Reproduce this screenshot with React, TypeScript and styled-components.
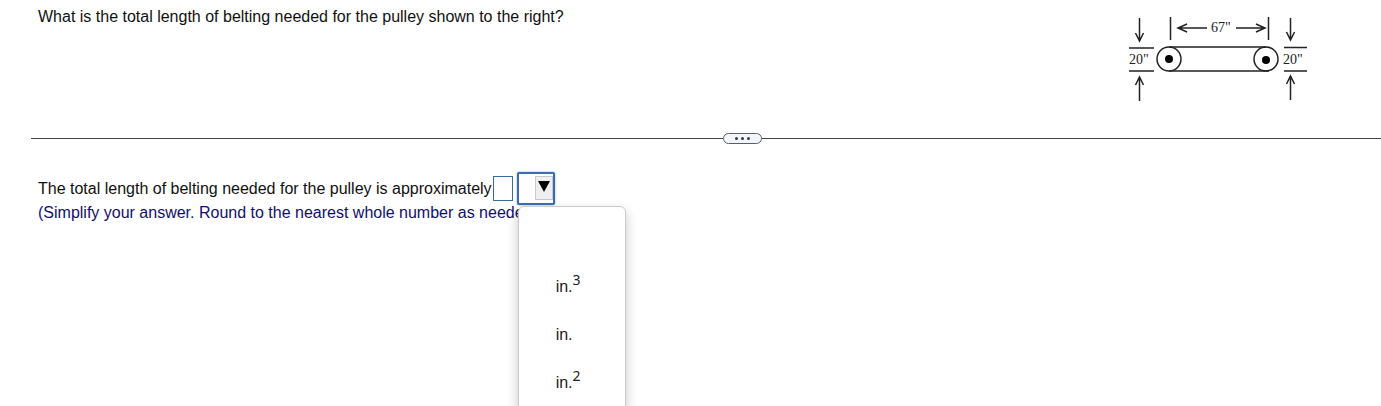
import React from "react";
import styled, { createGlobalStyle } from "styled-components";

const GlobalStyle = createGlobalStyle`
  * { box-sizing: border-box; }
  body {
    margin: 0;
    background: #fff;
    color: #111;
    font-family: "Liberation Sans", Arial, sans-serif;
    font-size: 16px;
    line-height: 20px;
  }
`;

const Page = styled.main`
  min-height: 100vh;
  overflow: hidden;
`;

const Question = styled.section`
  display: flex;
  justify-content: space-between;
  align-items: flex-start;
  min-height: 133px;
  padding: 7px 74px 0 38px;
`;

const Text = styled.p<{ $hint?: boolean }>`
  margin: 0;
  color: ${(p) => (p.$hint ? "#10106a" : "#111")};
`;

const Figure = styled.svg`
  flex: none;
  margin-top: 7px;
  fill: none;
  stroke: #222;
  stroke-width: 1.5;

  text {
    fill: #222;
    stroke: none;
    font-family: "Liberation Serif", "Times New Roman", serif;
    font-size: 14px;
  }
`;

const Divider = styled.div`
  display: flex;
  align-items: center;
  padding-left: 31px;
`;

const Line = styled.span<{ $grow: number }>`
  flex: ${(p) => p.$grow} 1 0;
  height: 1px;
  background: #444;
`;

const Expander = styled.button`
  display: flex;
  align-items: center;
  justify-content: center;
  gap: 3px;
  width: 39px;
  height: 11px;
  padding: 0;
  border: 1px solid #5a6068;
  border-radius: 6px;
  background: #f3f5f9;
`;

const Dot = styled.span`
  width: 3px;
  height: 3px;
  border-radius: 50%;
  background: #333a48;
`;

const Answer = styled.section`
  padding: 30px 38px 0;
`;

const AnswerRow = styled.div`
  display: flex;
  align-items: center;
  height: 29px;
`;

const NumberBox = styled.input`
  width: 20px;
  height: 25px;
  margin: 0 4px 0 1px;
  padding: 0 2px;
  border: 1px solid #3c6c94;
  background: #fff;
  font: inherit;
`;

const UnitPicker = styled.div`
  position: relative;
  flex: none;
  width: 38px;
  height: 33px;
`;

const UnitSelect = styled.select`
  display: block;
  width: 100%;
  height: 100%;
  padding: 0;
  appearance: none;
  border: 2px solid #3d6db0;
  border-radius: 2px;
  outline: none;
  box-shadow: 0 0 2px #6f9be0;
  background: #fff;
  font: inherit;
`;

const ArrowBox = styled.span`
  position: absolute;
  top: 4px;
  right: 2px;
  display: flex;
  justify-content: center;
  width: 18px;
  height: 24px;
  padding-top: 4px;
  border: 1px solid #c8c8c8;
  background: #efeff1;
  pointer-events: none;
`;

const Menu = styled.ul`
  position: absolute;
  top: 34px;
  left: 1px;
  z-index: 1;
  width: 108px;
  margin: 0;
  padding: 8px 0;
  list-style: none;
  border: 1px solid #ccc;
  border-radius: 6px;
  background: #fff;
  box-shadow: 0 5px 12px rgba(0, 0, 0, 0.22);
`;

const Option = styled.li`
  height: 48px;
  padding: 14px 0 14px 37px;
  color: #222;

  sup {
    font-family: "Noto Sans", sans-serif;
    font-size: 14px;
    line-height: 0;
    vertical-align: 7px;
  }
`;

const units = [
  { value: "", power: "" },
  { value: "in.", power: "3" },
  { value: "in.", power: "" },
  { value: "in.", power: "2" },
  { value: "", power: "" },
];

function PulleyFigure() {
  return (
    <Figure width="180" height="90" viewBox="0 0 180 90" role="img" aria-label="Belt around two pulleys">
      <path d="M12.500 4V27M8.500 19L12.500 27L16.500 19M12.500 87V63M8.500 71L12.500 63L16.500 71" />
      <path d="M163.500 4V26M159.500 18L163.500 26L167.500 18M163.500 86V62M159.500 70L163.500 62L167.500 70" />
      <path d="M2 34H27M2 57H27M157 33.500H180M157 57H180" />
      <path d="M43.500 3V26M141.500 3V26" />
      <path d="M80 14H51M60 10L51 14L60 18M109 14H138M129 10L138 14L129 18" />
      <path d="M42 33H139M42 57H142" />
      <circle cx="42" cy="45" r="12" />
      <circle cx="139" cy="45" r="12" />
      <circle cx="42" cy="45" r="4" fill="#000" stroke="none" />
      <circle cx="139" cy="46" r="4" fill="#000" stroke="none" />
      <text x="2" y="50">20"</text>
      <text x="84" y="18">67"</text>
      <text x="156" y="50">20"</text>
    </Figure>
  );
}

export default function App() {
  return (
    <Page>
      <GlobalStyle />
      <Question>
        <Text>What is the total length of belting needed for the pulley shown to the right?</Text>
        <PulleyFigure />
      </Question>
      <Divider>
        <Line $grow={692} />
        <Expander type="button" aria-label="Show more">
          <Dot />
          <Dot />
          <Dot />
        </Expander>
        <Line $grow={619} />
      </Divider>
      <Answer>
        <AnswerRow>
          <Text as="label" htmlFor="length">
            The total length of belting needed for the pulley is approximately
          </Text>
          <NumberBox id="length" type="text" />
          <UnitPicker>
            <UnitSelect aria-label="Unit" defaultValue="">
              <option value="" />
              <option value="in3">in.³</option>
              <option value="in">in.</option>
              <option value="in2">in.²</option>
            </UnitSelect>
            <ArrowBox>
              <svg width="12" height="11" viewBox="0 0 12 11" aria-hidden="true">
                <path d="M0 0H12L6 11Z" fill="#000" />
              </svg>
            </ArrowBox>
            <Menu role="listbox" aria-label="Units">
              {units.map((unit, i) => (
                <Option key={i} role="option">
                  {unit.value}
                  {unit.power && <sup>{unit.power}</sup>}
                </Option>
              ))}
            </Menu>
          </UnitPicker>
        </AnswerRow>
        <Text $hint>(Simplify your answer. Round to the nearest whole number as needed.)</Text>
      </Answer>
    </Page>
  );
}
